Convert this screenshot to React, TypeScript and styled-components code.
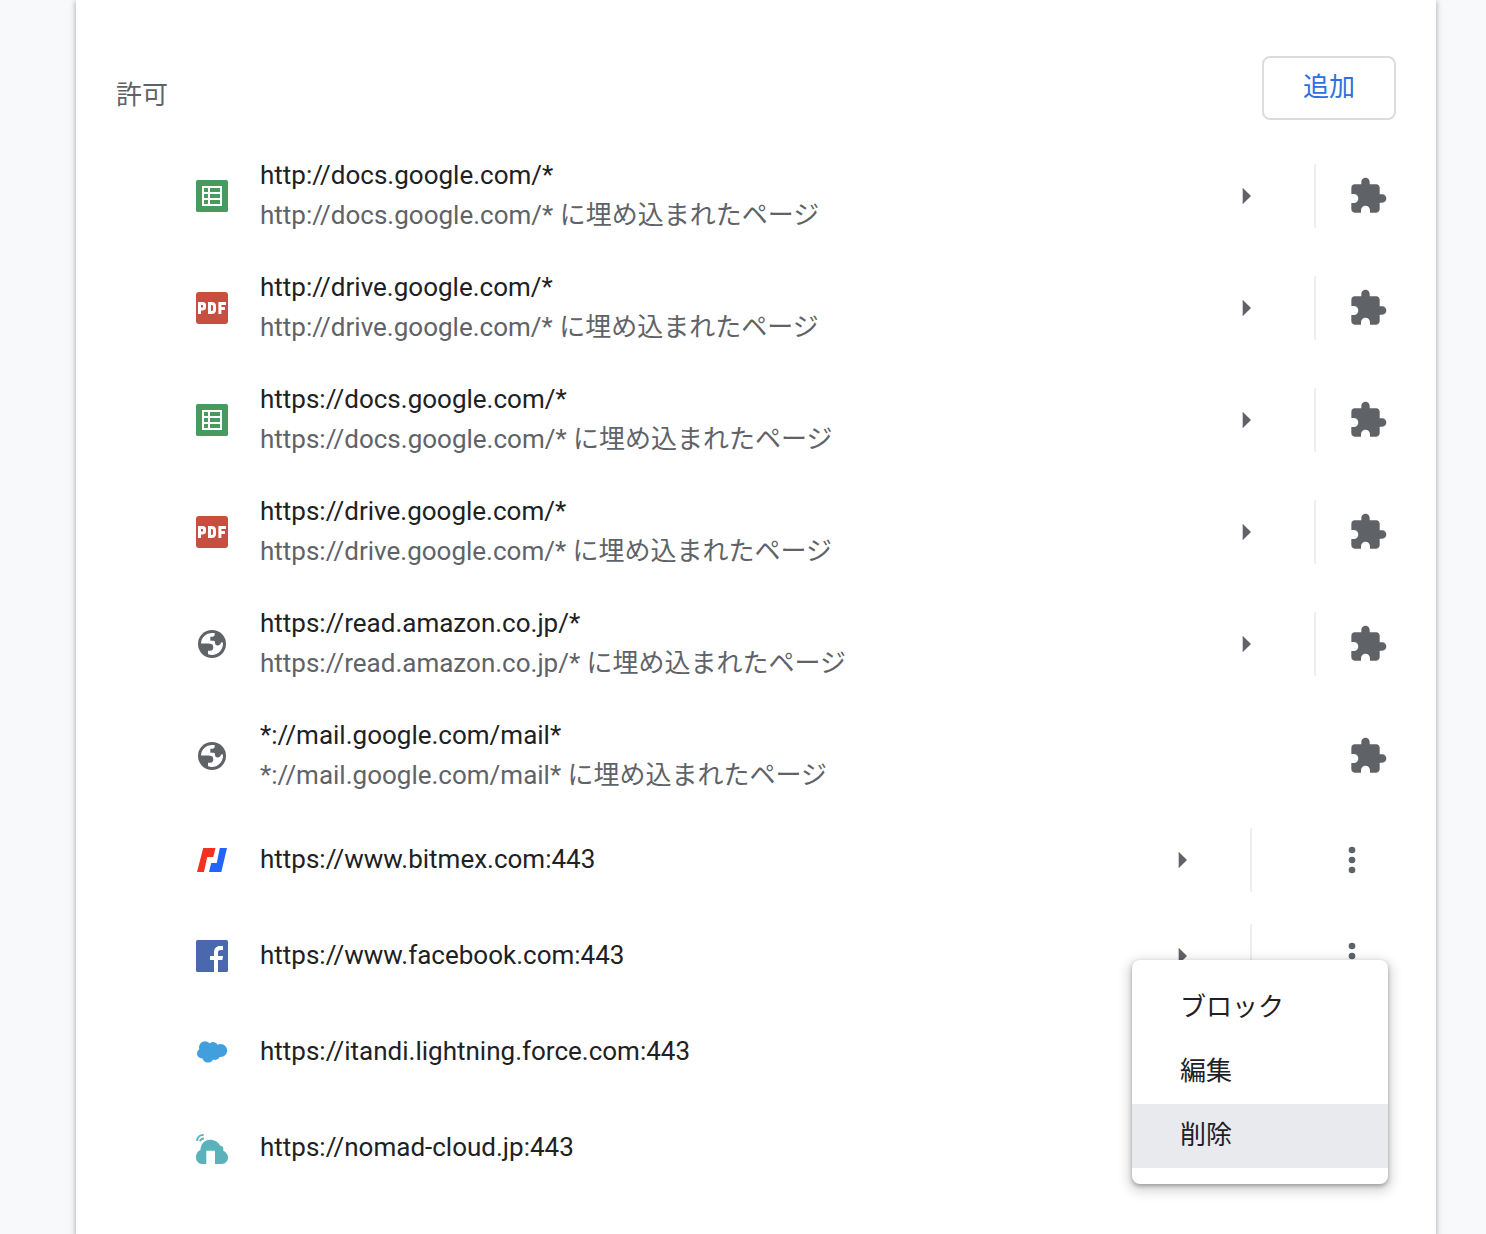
import React from "react";
import styled, { createGlobalStyle } from "styled-components";

const GlobalStyle = createGlobalStyle`
  * { box-sizing: border-box; }
  body {
    margin: 0;
    background: #f8f9fb;
    color: #202124;
    font-family: Roboto, "Noto Sans CJK JP", sans-serif;
    font-size: 26px;
    line-height: 40px;
  }
`;

const Page = styled.div`
  display: flex;
  justify-content: center;
  height: 1234px;
  padding-left: 26px;
  overflow: hidden;
`;

const Card = styled.main`
  width: 1360px;
  height: 1234px;
  padding: 56px 40px 0;
  background: #fff;
  box-shadow: 0 2px 4px rgba(60, 64, 67, 0.3), 0 2px 6px 2px rgba(60, 64, 67, 0.15);
`;

const Header = styled.header`
  display: flex;
  justify-content: space-between;
  height: 84px;
`;

const Title = styled.h2`
  margin: 0;
  padding-top: 19px;
  font-size: 26px;
  font-weight: 400;
  color: #5f6368;
`;

const AddButton = styled.button`
  width: 134px;
  height: 64px;
  padding: 0 0 2px;
  border: 2px solid #dadce0;
  border-radius: 8px;
  background: #fff;
  color: #2a72e0;
  font: inherit;
`;

const List = styled.ul`
  margin: 0;
  padding: 0 0 0 80px;
  list-style: none;
`;

const Row = styled.li<{ $tall?: boolean }>`
  display: flex;
  align-items: center;
  height: ${(p) => (p.$tall ? 112 : 96)}px;
`;

const Favicon = styled.svg<{ $soft?: boolean }>`
  flex: none;
  width: 32px;
  height: 32px;
  margin-right: 32px;
  filter: ${(p) => (p.$soft ? "blur(0.6px)" : "none")};
`;

const SiteText = styled.div`
  flex: 1;
  padding-bottom: 2px;
  white-space: nowrap;
`;

const SiteDetail = styled.div`
  color: #5f6368;
`;

const Glyph = styled.svg`
  display: block;
  width: 40px;
  height: 40px;
  fill: #5f6368;
`;

const Separator = styled.span`
  width: 2px;
  height: 64px;
  margin-left: 48px;
  background: #eeeeef;
`;

const Trailing = styled.span<{ $menu?: boolean }>`
  padding: ${(p) => (p.$menu ? "0 24px 0 80px" : "0 8px 0 32px")};
`;

const MenuAnchor = styled.div`
  position: relative;
`;

const Menu = styled.div`
  position: absolute;
  top: -236px;
  right: 8px;
  width: 256px;
  height: 224px;
  padding: 16px 0;
  border-radius: 8px;
  background: #fff;
  box-shadow: 0 2px 4px rgba(0, 0, 0, 0.3), 0 4px 12px 4px rgba(0, 0, 0, 0.15);
`;

const MenuItem = styled.div<{ $active?: boolean }>`
  height: 64px;
  padding: 11px 48px;
  background: ${(p) => (p.$active ? "#e8eaed" : "transparent")};
`;

type IconName = "sheets" | "pdf" | "globe" | "bitmex" | "facebook" | "cloud" | "nomad";

const icons: Record<IconName, React.ReactNode> = {
  sheets: (
    <>
      <rect width="32" height="32" rx="1.6" fill="#489b5f" />
      <path fill="#fff" fillRule="evenodd" d="M6 6h20v20H6zM8 8v4h4V8zM14 8v4h10V8zM8 14v4h4v-4zM14 14v4h10v-4zM8 20v4h4v-4zM14 20v4h10v-4z" />
    </>
  ),
  pdf: (
    <>
      <rect width="32" height="32" rx="3" fill="#c84f40" />
      <g fill="none" stroke="#fff" strokeWidth="3">
        <path d="M3.5 22V11.500H6.300Q8.500 11.500 8.500 13.300V15Q8.500 17 6.300 17H3.500" />
        <path d="M13.500 11.500H15.500Q18.500 11.500 18.500 14.200V17.800Q18.500 20.500 15.500 20.500H13.500Z" />
        <path d="M30 11.500H23.900V22M23.900 16.500H29" />
      </g>
    </>
  ),
  globe: (
    <>
      <circle cx="16" cy="16" r="14" fill="#5f6368" />
      <path
        fill="#fff"
        d="M5 15.500C5.200 9.500 10 5 16.300 5H18.700V6.500C18.700 8.500 17 8.700 15.500 8.700H14.300V12.800H17C19.300 12.800 19 14.500 19.300 16C20 18.200 24.500 18.200 25 14.500H27C27.500 21.500 22 27 16 27C14.800 27 14 26.700 12 26.200V22.800H14C16.500 22.800 17.300 21.500 17.300 19.300C17.300 16.500 15.500 15.500 12 15.500Z"
      />
    </>
  ),
  bitmex: (
    <>
      <path fill="#f13223" d="M7.200 4H19.500L17.300 13H11.200L8 28H1Z" />
      <path fill="#2363ff" d="M23.800 4H31L25.300 28H13L15.200 19H20.800Z" />
    </>
  ),
  facebook: (
    <>
      <rect width="32" height="32" rx="1.5" fill="#4a68ad" />
      <path fill="#fff" d="M18 32V20H14V16H18V12.300C18 8.300 20.300 6 24.200 6H27V10H24.800C22.600 10 22 11 22 12.700V16H27L26.400 20H22V32Z" />
    </>
  ),
  cloud: (
    <g fill="#429fdd">
      <circle cx="9" cy="11.300" r="6" />
      <circle cx="17" cy="11.300" r="5.300" />
      <circle cx="24.700" cy="14.500" r="6.500" />
      <circle cx="6" cy="17.500" r="5" />
      <circle cx="12" cy="20.800" r="5.800" />
      <circle cx="19" cy="19" r="5" />
      <rect x="7" y="9" width="16" height="13" />
    </g>
  ),
  nomad: (
    <>
      <path fill="#5ab3ba" d="M5 18C2 18.500 0 21.500 0 25.500C0 29.500 3 32 6.500 32H10.300V18.700H19V32H26C29.500 32 32 29 32 25.500C32 22 29.500 19.500 27.300 18.900V16.500C27 14.500 25 13.700 24 13.600C22.500 10 18.500 7.700 14 7.700C8.500 7.700 4.500 12 4.500 18Z" />
      <path fill="none" stroke="#5ab3ba" strokeWidth="2" d="M1 8.800C1.300 5.200 4 2.800 7.600 3M4 9.300C4.500 7.400 6 6.500 8 6.500" />
    </>
  ),
};

type Site = {
  icon: IconName;
  url: string;
  embedded?: boolean;
  arrow?: boolean;
  menu?: boolean;
  lowRes?: boolean;
};

const sites: Site[] = [
  { icon: "sheets", url: "http://docs.google.com/*", embedded: true, arrow: true },
  { icon: "pdf", url: "http://drive.google.com/*", embedded: true, arrow: true },
  { icon: "sheets", url: "https://docs.google.com/*", embedded: true, arrow: true },
  { icon: "pdf", url: "https://drive.google.com/*", embedded: true, arrow: true },
  { icon: "globe", url: "https://read.amazon.co.jp/*", embedded: true, arrow: true },
  { icon: "globe", url: "*://mail.google.com/mail*", embedded: true, lowRes: true },
  { icon: "bitmex", url: "https://www.bitmex.com:443", arrow: true, menu: true },
  { icon: "facebook", url: "https://www.facebook.com:443", arrow: true, menu: true },
  { icon: "cloud", url: "https://itandi.lightning.force.com:443" },
  { icon: "nomad", url: "https://nomad-cloud.jp:443" },
];

const Arrow = () => (
  <Glyph viewBox="0 0 24 24"><path d="M10 7l5 5-5 5z" /></Glyph>
);

const Puzzle = () => (
  <Glyph viewBox="0 0 24 24">
    <path d="M20.5 11H19V7c0-1.1-.9-2-2-2h-4V3.5C13 2.12 11.88 1 10.5 1S8 2.12 8 3.5V5H4c-1.1 0-1.99.9-1.99 2v3.8H3.5c1.49 0 2.7 1.21 2.7 2.7s-1.21 2.7-2.7 2.7H2V20c0 1.1.9 2 2 2h3.8v-1.5c0-1.49 1.21-2.7 2.7-2.7 1.49 0 2.7 1.21 2.7 2.7V22H17c1.1 0 2-.9 2-2v-4h1.5c1.38 0 2.5-1.12 2.5-2.5S21.88 11 20.5 11z" />
  </Glyph>
);

const Dots = () => (
  <Glyph viewBox="0 0 24 24">
    <circle cx="12" cy="6" r="2" />
    <circle cx="12" cy="12" r="2" />
    <circle cx="12" cy="18" r="2" />
  </Glyph>
);

export default function App() {
  return (
    <>
      <GlobalStyle />
      <Page>
        <Card>
          <Header>
            <Title>許可</Title>
            <AddButton>追加</AddButton>
          </Header>
          <List>
            {sites.map((site) => (
              <Row key={site.url} $tall={site.embedded}>
                <Favicon viewBox="0 0 32 32" $soft={site.lowRes}>{icons[site.icon]}</Favicon>
                <SiteText>
                  <div>{site.url}</div>
                  {site.embedded && <SiteDetail>{site.url} に埋め込まれたページ</SiteDetail>}
                </SiteText>
                {site.arrow && (
                  <>
                    <Arrow />
                    <Separator />
                  </>
                )}
                {(site.embedded || site.menu) && (
                  <Trailing $menu={site.menu}>{site.menu ? <Dots /> : <Puzzle />}</Trailing>
                )}
              </Row>
            ))}
          </List>
          <MenuAnchor>
            <Menu>
              <MenuItem>ブロック</MenuItem>
              <MenuItem>編集</MenuItem>
              <MenuItem $active>削除</MenuItem>
            </Menu>
          </MenuAnchor>
        </Card>
      </Page>
    </>
  );
}
